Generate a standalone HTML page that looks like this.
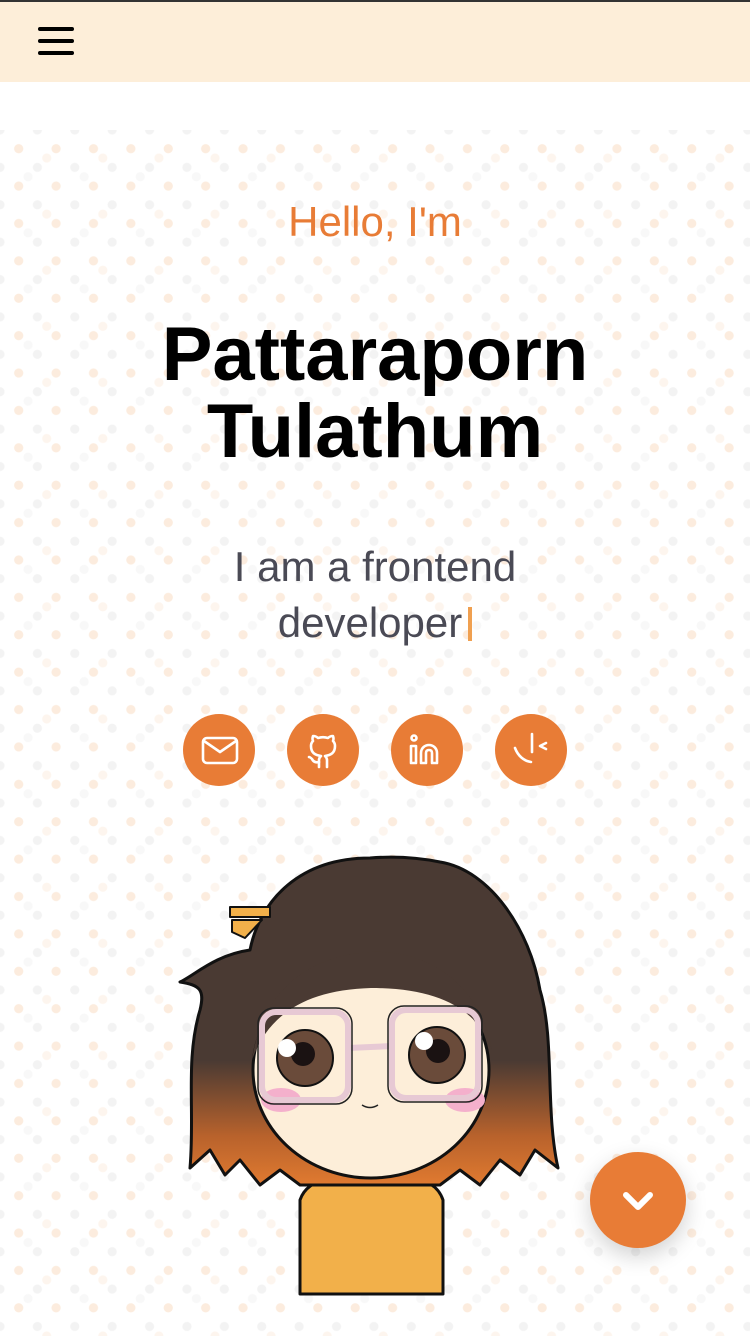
<!DOCTYPE html>
<html><head><meta charset="utf-8"><style>
*{margin:0;padding:0;box-sizing:border-box}
html,body{width:750px;height:1336px;overflow:hidden;background:#fff;font-family:"Liberation Sans",sans-serif}
.top{position:absolute;left:0;top:0;width:750px;height:2px;background:#333}
header{position:absolute;left:0;top:2px;width:750px;height:80px;background:#fdeed9}
.hb{position:absolute;left:38px;width:36px;height:4px;background:#000;border-radius:2px}
.dots{position:absolute;left:0;top:130px;width:750px;height:1206px;opacity:.75;
background-image:radial-gradient(circle,#fbe6d3 4.3px,transparent 4.8px),radial-gradient(circle,#f0f0f0 4.3px,transparent 4.8px);
background-size:37.4px 37.4px,37.4px 37.4px;background-position:0px 0px,18.7px 18.7px}
.dots2{position:absolute;left:0;top:130px;width:750px;height:1206px;opacity:.6;
background-image:radial-gradient(circle,#fdf0e4 4.3px,transparent 4.8px),radial-gradient(circle,#f4f4f4 4.3px,transparent 4.8px);
background-size:56.1px 56.1px,56.1px 56.1px;background-position:18.7px 0px,0px 18.7px}
.t{position:absolute;left:0;width:750px;text-align:center}
.hello{top:198px;color:#e87c36;font-size:42px}
.name{top:316px;font-size:76px;font-weight:bold;line-height:77px;color:#000}
.sub{top:539px;font-size:42px;line-height:56px;color:#4a4a55}
.cur{display:inline-block;width:4px;height:34px;background:#f0a050;vertical-align:-4px;margin-left:6px}
.ic{position:absolute;top:714px;width:72px;height:72px;border-radius:50%;background:#e87c36}
.ic svg{position:absolute;left:0;top:0}
.fab{position:absolute;left:590px;top:1152px;width:96px;height:96px;border-radius:50%;background:#e87c36;box-shadow:0 8px 22px rgba(0,0,0,.18)}
</style></head><body>
<div class="top"></div>
<header><div class="hb" style="top:25px"></div><div class="hb" style="top:37px"></div><div class="hb" style="top:49px"></div></header>
<div class="dots"></div><div class="dots2"></div>
<div class="t hello">Hello, I'm</div>
<div class="t name">Pattaraporn<br>Tulathum</div>
<div class="t sub">I am a frontend<br>developer<span class="cur"></span></div>

<div class="ic" style="left:183px"><svg width="72" height="72" viewBox="0 0 72 72" fill="none" stroke="#fff" stroke-width="2.6" stroke-linecap="round" stroke-linejoin="round"><rect x="20" y="24" width="34" height="25" rx="4"/><path d="M21 27l16 11 16-11"/></svg></div>
<div class="ic" style="left:287px"><svg width="72" height="72" viewBox="0 0 72 72" fill="none" stroke="#fff" stroke-width="2.6" stroke-linecap="round" stroke-linejoin="round"><path d="M32 53v-7c0-2 1-3 2-4-6-1-10-3-10-10 0-2 1-4 2-5-1-2 0-5 0-5 2 0 4 1 5 2 3-1 7-1 10 0 1-1 3-2 5-2 0 0 1 3 0 5 1 1 2 3 2 5 0 7-4 9-10 10 1 1 2 2 2 4v7"/><path d="M32 48c-4 1-6-1-7-3-1-1-2-2-3-2"/></svg></div>
<div class="ic" style="left:391px"><svg width="72" height="72" viewBox="0 0 72 72" fill="none" stroke="#fff" stroke-width="2.6" stroke-linecap="round" stroke-linejoin="round"><circle cx="23" cy="24" r="2.5"/><path d="M20 32h5v17h-5z"/><path d="M30 49V39c0-5 4-8 8-8s8 3 8 8v10h-5V39c0-2-1-3-3-3s-3 1-3 3v10z"/></svg></div>
<div class="ic" style="left:495px"><svg width="72" height="72" viewBox="0 0 72 72" fill="none" stroke="#fff" stroke-width="2.6" stroke-linecap="round" stroke-linejoin="round"><path d="M20 34c3 8 9 13 16 14"/><path d="M37 20v18"/><path d="M51 29l-6 3 6 3"/></svg></div>

<svg style="position:absolute;left:0;top:0" width="750" height="1336" viewBox="0 0 750 1336">
<defs><linearGradient id="hg" x1="0" y1="0" x2="0" y2="1"><stop offset="0" stop-color="#4a3a33"/><stop offset="0.62" stop-color="#4a3a33"/><stop offset="0.85" stop-color="#b8622c"/><stop offset="1" stop-color="#e07a30"/></linearGradient></defs>
<g stroke="#111" stroke-width="3" stroke-linejoin="round">
<path d="M300 1294 L300 1200 C305 1185 320 1180 330 1178 L412 1178 C425 1180 438 1185 443 1200 L443 1294 Z" fill="#f2b04a"/>
<path d="M370 858 C300 858 260 900 250 950 C215 955 195 975 180 982 C200 985 205 990 200 1010 C185 1060 195 1110 190 1168 L210 1150 L225 1175 L240 1160 L260 1185 L280 1170 L300 1185 L440 1185 L460 1170 L480 1185 L500 1160 L520 1175 L535 1150 L558 1168 C545 1110 555 1040 540 990 C530 930 490 870 440 862 C420 858 395 856 370 858 Z" fill="url(#hg)"/>
<ellipse cx="371" cy="1070" rx="118" ry="108" fill="#fdeed9"/>
<path d="M252 1060 C262 990 310 955 371 952 C430 950 480 985 492 1050 C478 1010 440 988 371 988 C305 990 268 1015 252 1060 Z" fill="#4a3a33" stroke="none"/>
<path d="M230 907 L270 907 L270 917 L230 917 Z M232 920 L262 920 L245 938 L232 932 Z" fill="#f2b04a" stroke-width="2"/>
</g>
<ellipse cx="281" cy="1100" rx="20" ry="12" fill="#f4b0cc"/>
<ellipse cx="465" cy="1100" rx="20" ry="12" fill="#f4b0cc"/>
<g stroke="#111" stroke-width="2">
<circle cx="305" cy="1058" r="28" fill="#6a4b3a"/>
<circle cx="437" cy="1055" r="28" fill="#6a4b3a"/>
</g>
<circle cx="303" cy="1054" r="12" fill="#1a1212"/><circle cx="438" cy="1051" r="12" fill="#1a1212"/>
<circle cx="287" cy="1048" r="9" fill="#fff"/><circle cx="424" cy="1041" r="9" fill="#fff"/>
<g fill="none" stroke="#e7c9d4" stroke-width="6">
<rect x="262" y="1012" width="86" height="88" rx="14"/><rect x="392" y="1010" width="86" height="88" rx="14"/><path d="M348 1048 L392 1046"/>
</g>
<g fill="none" stroke="#222" stroke-width="1.5">
<rect x="258" y="1008" width="94" height="96" rx="16"/><rect x="388" y="1006" width="94" height="96" rx="16"/>
<path d="M362 1105 Q370 1110 378 1105"/>
</g>
</svg>

<div class="fab"><svg width="96" height="96" viewBox="0 0 96 96" fill="none" stroke="#fff" stroke-width="6" stroke-linecap="round" stroke-linejoin="round"><path d="M36 43l12 12 12-12"/></svg></div>
</body></html>
